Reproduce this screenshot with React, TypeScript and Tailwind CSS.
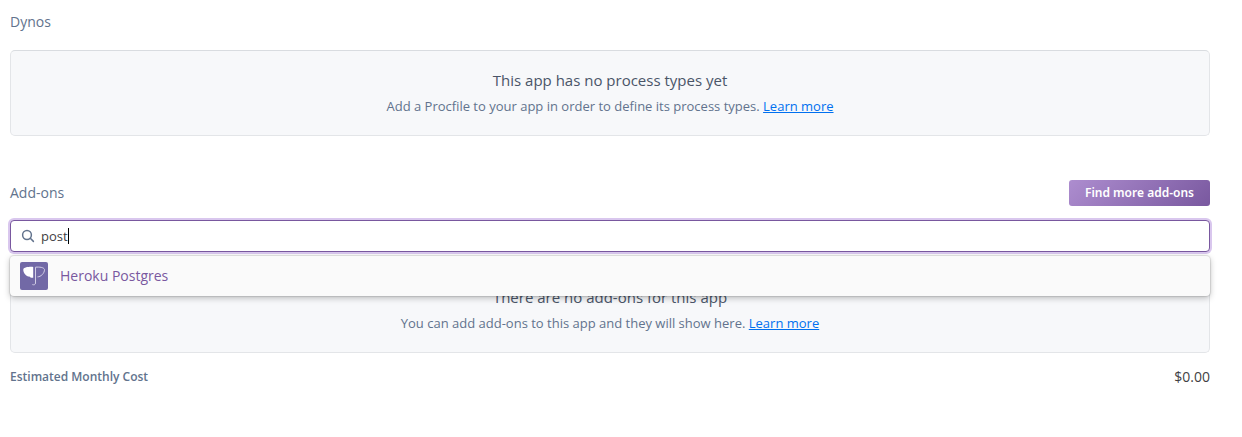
import { useState, type ReactNode } from "react";

function EmptyPanel({ title, children }: { title: string; children: ReactNode }) {
  return (
    <div className="rounded-[5px] border border-[#e3e5e8] border-t-[#d9dce0] bg-[#f7f8fa] px-4 pt-[17px] pb-[19px] text-center">
      <p className="text-[15px] leading-6 text-[#4a5568]">{title}</p>
      <p className="mt-1 text-[13px] leading-5 text-[#62738d]">
        {children}{" "}
        <a href="#learn-more" className="text-[#0070f0] underline">
          Learn more
        </a>
      </p>
    </div>
  );
}

function SearchIcon() {
  return (
    <svg
      viewBox="0 0 14 14"
      className="h-3.5 w-3.5 shrink-0"
      fill="none"
      stroke="#62738d"
      strokeWidth="1.5"
      strokeLinecap="round"
      aria-hidden="true"
    >
      <circle cx="6" cy="6" r="4.4" />
      <path d="M9.3 9.3 12.4 12.4" />
    </svg>
  );
}

function PostgresIcon() {
  return (
    <svg viewBox="0 0 28 28" className="h-7 w-7 shrink-0" aria-hidden="true">
      <rect width="28" height="28" rx="2" fill="#7269a6" />
      <path d="M13.2 4.9C9 4.6 4.2 5.2 3.3 7.2C3.1 11 6.2 14.4 9.4 14.6C10 15.6 11.6 16 13.2 15.8Z" fill="#fff" />
      <path
        d="M17.5 14.9C20.8 14.8 24.6 11.4 24.5 7.4C23.6 5.2 19.6 4.9 15.5 5.2V21C15.5 22.8 14 23 12.4 22.6"
        fill="none"
        stroke="#d3cfe6"
        strokeWidth="1"
      />
    </svg>
  );
}

export default function App() {
  const [query, setQuery] = useState("post");

  return (
    <main className="min-h-screen bg-white pt-3 pr-8 pb-8 pl-2.5 font-['Open_Sans',sans-serif]">
      <section>
        <h2 className="text-[14px] leading-5 text-[#62738d]">Dynos</h2>
        <div className="mt-[18px]">
          <EmptyPanel title="This app has no process types yet">
            Add a Procfile to your app in order to define its process types.
          </EmptyPanel>
        </div>
      </section>

      <section className="mt-11">
        <div className="flex items-center justify-between">
          <label htmlFor="addon-search" className="text-[14px] leading-5 text-[#62738d]">
            Add-ons
          </label>
          <button
            type="button"
            className="h-[26px] rounded-[3px] bg-linear-[135deg] from-[#ad8dcf] to-[#79589f] px-4 font-['Noto_Sans',sans-serif] text-[12px] font-semibold text-white"
          >
            Find more add-ons
          </button>
        </div>

        <div className="relative mt-3.5">
          <div className="flex h-8 items-center gap-1.5 rounded-[4px] border border-[#79589f] bg-white px-2.5 ring-2 ring-[#d9c7ee]">
            <SearchIcon />
            <div className="relative flex min-w-0 grow items-center text-[13px] leading-5">
              <input
                id="addon-search"
                type="text"
                value={query}
                onChange={(event) => setQuery(event.target.value)}
                className="w-full bg-transparent text-[#3f3f44] outline-none"
              />
              <span className="pointer-events-none absolute left-0 flex items-center" aria-hidden="true">
                <span className="invisible">{query}</span>
                <span className="h-4 w-px bg-black" />
              </span>
            </div>
          </div>
          <ul className="absolute inset-x-0 top-full mt-1 rounded-[4px] bg-[#fafafa] shadow-[0_0_1px_1px_rgba(0,0,0,0.1),0_2px_6px_rgba(0,0,0,0.25)]">
            <li>
              <a href="#heroku-postgres" className="flex items-center gap-3 px-2.5 py-1.5 text-[14px] leading-5 text-[#79589f]">
                <PostgresIcon />
                Heroku Postgres
              </a>
            </li>
          </ul>
        </div>

        <div className="mt-[15px]">
          <EmptyPanel title="There are no add-ons for this app">
            You can add add-ons to this app and they will show here.
          </EmptyPanel>
        </div>
      </section>

      <div className="mt-3.5 flex items-center justify-between leading-5">
        <span className="text-[12px] font-semibold text-[#62738d]">Estimated Monthly Cost</span>
        <span className="text-[14px] text-[#3f3f44]">$0.00</span>
      </div>
    </main>
  );
}
